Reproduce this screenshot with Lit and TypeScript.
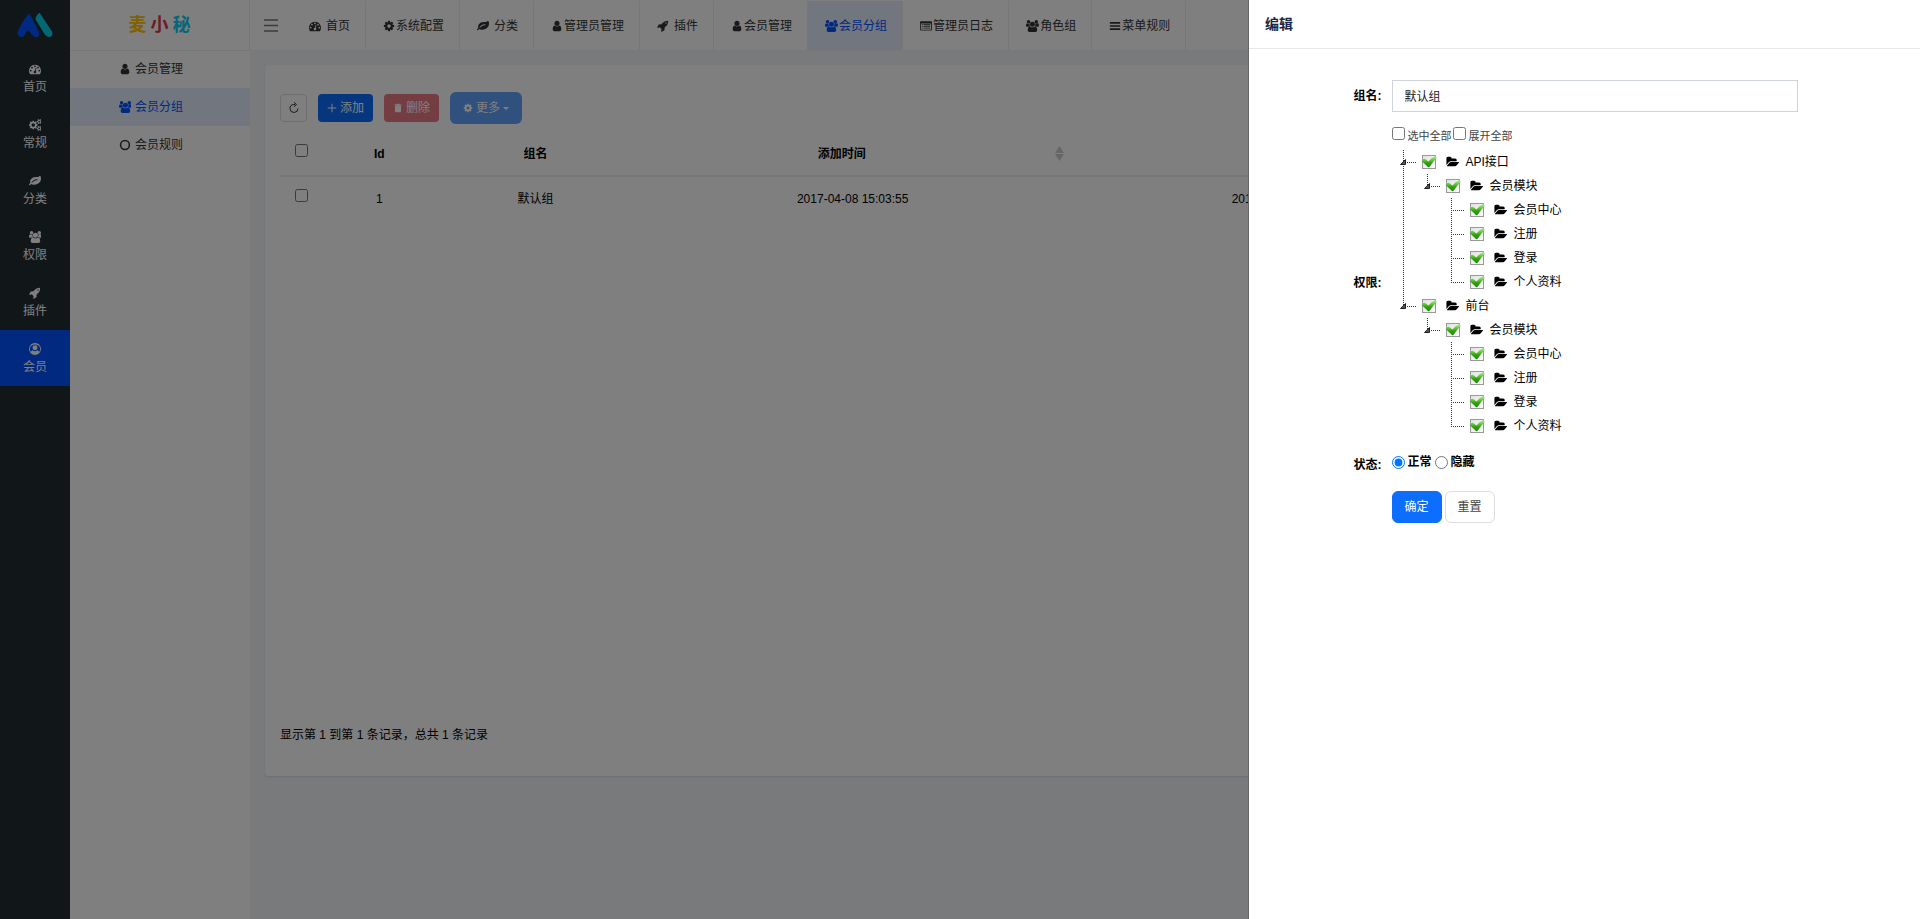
import { LitElement, html, css, svg, nothing, TemplateResult } from "lit";
import { customElement } from "lit/decorators.js";
import { classMap } from "lit/directives/class-map.js";

type Glyph = { w: number; body: TemplateResult };
const glyph = (w: number, d: string): Glyph => ({ w, body: svg`<path d=${d}></path>` as any });

const GLYPHS: Record<string, Glyph> = {
  user: glyph(1792, "M1536 1399q0 109-62.5 187t-150.5 78h-854q-88 0-150.5-78t-62.5-187q0-85 8.5-160.5t31.5-152 58.5-131 94-89 134.5-34.5q131 128 313 128t313-128q76 0 134.5 34.5t94 89 58.5 131 31.5 152 8.5 160.5zm-256-887q0 159-112.5 271.5t-271.5 112.5-271.5-112.5-112.5-271.5 112.5-271.5 271.5-112.5 271.5 112.5 112.5 271.5z"),
  cog: glyph(1792, "M1152 896q0-106-75-181t-181-75-181 75-75 181 75 181 181 75 181-75 75-181zm512-109v222q0 12-8 23t-20 13l-185 28q-19 54-39 91 35 50 107 138 10 12 10 25t-9 23q-27 37-99 108t-94 71q-12 0-26-9l-138-108q-44 23-91 38-16 136-29 186-7 28-36 28h-222q-14 0-24.5-8.5t-11.5-21.5l-28-184q-49-16-90-37l-141 107q-10 9-25 9-14 0-25-11-126-114-165-168-7-10-7-23 0-12 8-23 15-21 51-66.5t54-70.5q-27-50-41-99l-183-27q-13-2-21-12.5t-8-23.5v-222q0-12 8-23t19-13l186-28q14-46 39-92-40-57-107-138-10-12-10-24 0-10 9-23 26-36 98.5-107.5t94.5-71.5q13 0 26 10l138 107q44-23 91-38 16-136 29-186 7-28 36-28h222q14 0 24.5 8.5t11.5 21.5l28 184q49 16 90 37l142-107q9-9 24-9 13 0 25 10 129 119 165 170 7 8 7 22 0 12-8 23-15 21-51 66.5t-54 70.5q26 50 41 98l183 28q13 2 21 12.5t8 23.5z"),
  cogs: glyph(1920, "M896 896q0-106-75-181t-181-75-181 75-75 181 75 181 181 75 181-75 75-181zm768 512q0-52-38-90t-90-38-90 38-38 90q0 53 37.5 90.5t90.5 37.5 90.5-37.5 37.5-90.5zm0-1024q0-52-38-90t-90-38-90 38-38 90q0 53 37.5 90.5t90.5 37.5 90.5-37.5 37.5-90.5zm-384 421v185q0 10-7 19.5t-16 10.5l-155 24q-11 35-32 76 34 48 90 115 7 11 7 20 0 12-7 19-23 30-82.5 89.5t-78.5 59.5q-11 0-21-7l-115-90q-37 19-77 31-11 108-23 155-7 24-30 24h-186q-11 0-20-7.5t-10-17.5l-23-153q-34-10-75-31l-118 89q-7 7-20 7-11 0-21-8-144-133-144-160 0-9 7-19 10-14 41-53t47-61q-23-44-35-82l-152-24q-10-1-17-9.5t-7-19.5v-185q0-10 7-19.5t16-10.5l155-24q11-35 32-76-34-48-90-115-7-11-7-20 0-12 7-20 22-30 82-89t79-59q11 0 21 7l115 90q34-18 77-32 11-108 23-154 7-24 30-24h186q11 0 20 7.5t10 17.5l23 153q34 10 75 31l118-89q8-7 20-7 11 0 21 8 144 133 144 160 0 8-7 19-12 16-42 54t-45 60q23 48 34 82l152 23q10 2 17 10.5t7 19.5zm640 533v140q0 16-149 31-12 27-30 52 51 113 51 138 0 4-4 7-122 71-124 71-8 0-46-47t-52-68q-20 2-30 2t-30-2q-14 21-52 68t-46 47q-2 0-124-71-4-3-4-7 0-25 51-138-18-25-30-52-149-15-149-31v-140q0-16 149-31 13-29 30-52-51-113-51-138 0-4 4-7 4-2 35-20t59-34 30-16q8 0 46 46.5t52 67.5q20-2 30-2t30 2q51-71 92-112l6-2q4 0 124 70 4 3 4 7 0 25-51 138 17 23 30 52 149 15 149 31zm0-1024v140q0 16-149 31-12 27-30 52 51 113 51 138 0 4-4 7-122 71-124 71-8 0-46-47t-52-68q-20 2-30 2t-30-2q-14 21-52 68t-46 47q-2 0-124-71-4-3-4-7 0-25 51-138-18-25-30-52-149-15-149-31v-140q0-16 149-31 13-29 30-52-51-113-51-138 0-4 4-7 4-2 35-20t59-34 30-16q8 0 46 46.5t52 67.5q20-2 30-2t30 2q51-71 92-112l6-2q4 0 124 70 4 3 4 7 0 25-51 138 17 23 30 52 149 15 149 31z"),
  leaf: glyph(1792, "M1280 704q0-26-19-45t-45-19q-172 0-318 49.5t-259.5 134-235.5 219.5q-19 21-19 45 0 26 19 45t45 19q24 0 45-19 27-24 74-71t67-66q137-124 268.5-176t313.5-52q26 0 45-19t19-45zm512-198q0 95-20 193-46 224-184.5 383t-357.5 268q-214 108-438 108-148 0-286-47-15-5-88-42t-96-37q-16 0-39.5 32t-45 70-52.5 70-60 32q-43 0-63.5-17.5t-45.5-59.5q-2-4-6-11t-5.5-10-3-9.5-1.5-13.5q0-35 31-73.5t68-65.5 68-56 31-48q0-4-14-38t-16-44q-9-51-9-104 0-115 43.5-220t119-184.5 170.5-139 204-95.5q55-18 145-25.5t179.5-9 178.5-6 163.5-24 113.5-56.5l29.5-29.5 29.5-28 27-20 36.5-16 43.5-4.5q39 0 70.5 46t47.5 112 24 124 8 96z"),
  rocket: glyph(1792, "M1440 448q0-40-28-68t-68-28-68 28-28 68 28 68 68 28 68-28 28-68zm224-288q0 249-75.5 430.5t-253.5 360.5q-81 80-195 176l-20 379q-2 16-16 26l-384 224q-7 4-16 4-12 0-23-9l-64-64q-13-14-8-32l85-276-281-281-276 85q-3 1-9 1-14 0-23-9l-64-64q-17-19-5-39l224-384q10-14 26-16l379-20q96-114 176-195 188-187 358-258t431-71q14 0 24 9.5t10 22.5z"),
  dash: glyph(1792, "M384 1152q0-53-37.5-90.5t-90.5-37.5-90.5 37.5-37.5 90.5 37.5 90.5 90.5 37.5 90.5-37.5 37.5-90.5zm192-448q0-53-37.5-90.5t-90.5-37.5-90.5 37.5-37.5 90.5 37.5 90.5 90.5 37.5 90.5-37.5 37.5-90.5zm428 481l101-382q6-26-7.5-48.5t-38.5-29.5-48 6.5-30 39.5l-101 382q-60 5-107 43.5t-63 98.5q-20 77 20 146t117 89 146-20 89-117q16-60-6-117t-72-91zm660-33q0-53-37.5-90.5t-90.5-37.5-90.5 37.5-37.5 90.5 37.5 90.5 90.5 37.5 90.5-37.5 37.5-90.5zm-640-640q0-53-37.5-90.5t-90.5-37.5-90.5 37.5-37.5 90.5 37.5 90.5 90.5 37.5 90.5-37.5 37.5-90.5zm448 192q0-53-37.5-90.5t-90.5-37.5-90.5 37.5-37.5 90.5 37.5 90.5 90.5 37.5 90.5-37.5 37.5-90.5zm320 448q0 261-141 483-19 29-54 29h-1402q-35 0-54-29-141-221-141-483 0-182 71-348t191-286 286-191 348-71 348 71 286 191 191 286 71 348z"),
  users: glyph(1920, "M593 896q-162 5-265 128h-134q-82 0-138-40.5t-56-118.5q0-353 124-353 6 0 43.5 21t97.5 42.5 119 21.5q67 0 133-23-5 37-5 66 0 159 93 292zm1071 637q0 120-73 189.5t-194 69.5h-874q-121 0-194-69.5t-73-189.5q0-53 3.5-103.5t14-109 26.5-108.5 43-97.5 62-81 85.5-53.5 111.5-20q10 0 43 21.5t73 48 107 48 135 21.5 135-21.5 107-48 73-48 43-21.5q61 0 111.5 20t85.5 53.5 62 81 43 97.5 26.5 108.5 14 109 3.5 103.5zm-1024-1277q0 106-75 181t-181 75-181-75-75-181 75-181 181-75 181 75 75 181zm704 384q0 159-112.5 271.5t-271.5 112.5-271.5-112.5-112.5-271.5 112.5-271.5 271.5-112.5 271.5 112.5 112.5 271.5zm576 225q0 78-56 118.5t-138 40.5h-134q-103-123-265-128 93-133 93-292 0-29-5-66 66 23 133 23 59 0 119-21.5t97.5-42.5 43.5-21q124 0 124 353zm-128-609q0 106-75 181t-181 75-181-75-75-181 75-181 181-75 181 75 75 181z"),
  folder: glyph(1943, "M1943 952q0 31-31 66l-336 396q-43 51-120.5 86.5t-143.5 35.5h-1088q-34 0-60.5-13t-26.5-43q0-31 31-66l336-396q43-51 120.5-86.5t143.5-35.5h1088q34 0 60.5 13t26.5 43zm-343-344v160h-832q-94 0-197 47.5t-164 119.5l-337 396-5 6q0-4-.5-12.5t-.5-12.5v-960q0-92 66-158t158-66h320q92 0 158 66t66 158v32h544q92 0 158 66t66 158z"),
  bars: glyph(1792, "M128 300h1536v250h-1536zM128 770h1536v250h-1536zM128 1240h1536v250h-1536z"),
  trash: glyph(1792, "M640 128h512l64 128h320v192H256V256h320zM352 512h1088v1024q0 128-128 128H480q-128 0-128-128z"),
  plus: glyph(1792, "M812 132h168v680h680v168H980v680H812V980H132V812h680z"),
  circle: { w: 1792, body: svg`<circle cx="896" cy="896" r="660" fill="none" stroke="currentColor" stroke-width="230"></circle>` as any },
  member: { w: 1792, body: svg`<path fill-rule="evenodd" d="M896 0a896 896 0 1 1 0 1792a896 896 0 0 1 0-1792zM896 130a766 766 0 0 0-766 766q0 230 130 430q80-200 280-240q150 130 356 130t356-130q200 40 280 240q130-200 130-430A766 766 0 0 0 896 130z" transform="rotate(0)"></path><path d="M896 330a370 370 0 1 1 0 740a370 370 0 0 1 0-740z"></path><path d="M200 350Q896-260 1592 350L1450 420Q896 0 342 420z"></path>` as any },
  list: { w: 1792, body: svg`<path fill-rule="evenodd" d="M160 192h1472q160 0 160 160v1056q0 160-160 160H160Q0 1568 0 1408V352Q0 192 160 192zM128 512v896q0 32 32 32h1472q32 0 32-32V512z"></path><path d="M256 640h160v128H256zM512 640h1024v128H512zM256 896h160v128H256zM512 896h1024v128H512zM256 1152h160v128H256zM512 1152h1024v128H512z"></path>` as any },
};

const icon = (name: string, size = 12) => {
  const g = GLYPHS[name];
  return html`<svg class="icon" aria-hidden="true" height=${size} width=${(size * g.w) / 1792}
    viewBox="0 0 ${g.w} 1792" fill="currentColor">${g.body}</svg>`;
};

type Item = { icon: string; text: string; active?: boolean; spaced?: boolean };
type Node = { text: string; children?: Node[] };

const MODULES: Item[] = [
  { icon: "dash", text: "首页" },
  { icon: "cogs", text: "常规" },
  { icon: "leaf", text: "分类" },
  { icon: "users", text: "权限" },
  { icon: "rocket", text: "插件" },
  { icon: "member", text: "会员", active: true },
];

const MENU: Item[] = [
  { icon: "user", text: "会员管理" },
  { icon: "users", text: "会员分组", active: true },
  { icon: "circle", text: "会员规则" },
];

const TABS: Item[] = [
  { icon: "dash", text: "首页", spaced: true },
  { icon: "cog", text: "系统配置" },
  { icon: "leaf", text: "分类", spaced: true },
  { icon: "user", text: "管理员管理" },
  { icon: "rocket", text: "插件", spaced: true },
  { icon: "user", text: "会员管理" },
  { icon: "users", text: "会员分组", active: true },
  { icon: "list", text: "管理员日志" },
  { icon: "users", text: "角色组" },
  { icon: "bars", text: "菜单规则" },
];

const memberModule = (): Node => ({
  text: "会员模块",
  children: [{ text: "会员中心" }, { text: "注册" }, { text: "登录" }, { text: "个人资料" }],
});

const TREE: Node[] = [
  { text: "API接口", children: [memberModule()] },
  { text: "前台", children: [memberModule()] },
];

const base = css`
  * { box-sizing: border-box; }
  ul { list-style: none; margin: 0; padding: 0; }
  a { color: inherit; text-decoration: none; }
  button, input { font: inherit; }
  .icon { display: block; flex: none; }
`;

@customElement("permission-tree")
export class PermissionTree extends LitElement {
  static styles = [base, css`
    :host { display: block; line-height: 24px; color: #000; }
    .node {
      background-image: repeating-linear-gradient(to bottom, #333 0 1px, transparent 1px 2px);
      background-repeat: no-repeat;
      background-position: 11px 0;
      background-size: 1px 100%;
    }
    .node.last { background-size: 1px 12px; }
    .kids { padding-left: 24px; }
    .row {
      display: grid;
      grid-template-columns: 24px 30px 20px auto;
      justify-content: start;
      align-items: center;
      height: 24px;
      background: repeating-linear-gradient(to right, #333 0 1px, transparent 1px 2px) 11px 12px / 13px 1px no-repeat;
    }
    .arrow { width: 6px; height: 6px; margin-left: 8px; margin-bottom: 1px; display: block; }
    .tick { display: grid; width: 16px; height: 16px; margin-left: 5px; place-items: center; }
    .tick > * { grid-area: 1 / 1; }
    .box {
      appearance: none; margin: 0; width: 14px; height: 14px;
      border: 1px solid #999; background: linear-gradient(135deg, #e2e2e2, #fbfbfb);
    }
    .mark { pointer-events: none; visibility: hidden; }
    .box:checked + .mark { visibility: visible; }
  `];

  private node(n: Node, last: boolean, path: string): TemplateResult {
    const kids = n.children;
    return html`<li class=${classMap({ node: true, last })}>
      <div class="row">
        <span>${kids ? html`<svg class="arrow" viewBox="0 0 6 6"><path d="M5.5 .5V5.5H.5z" fill="#555" stroke="#222" /></svg>` : nothing}</span>
        <span class="tick">
          <input class="box" type="checkbox" id=${path} checked>
          <svg class="mark" width="16" height="16" viewBox="0 0 16 16">
            <defs><linearGradient id="shine" x1="0" y1="0" x2="0" y2="1">
              <stop offset="0" stop-color="#b4e89a"/><stop offset=".4" stop-color="#5cc235"/><stop offset=".6" stop-color="#2fa30c"/><stop offset="1" stop-color="#1f8a06"/>
            </linearGradient></defs>
            <path d="M.6 7Q2.400 4 4.600 5.200L7.400 7.400Q10.200 3.600 14 2.200Q16 2 15.600 4Q11.800 8 8.800 12.500Q7.600 13.800 6.400 12.500Q3.600 9.800 .6 7z" fill="url(#shine)"/>
          </svg>
        </span>
        ${icon("folder", 12)}
        <label for=${path}>${n.text}</label>
      </div>
      ${kids ? html`<ul class="kids">${kids.map((k, i) => this.node(k, i === kids.length - 1, `${path}-${i}`))}</ul>` : nothing}
    </li>`;
  }

  render() {
    return html`<ul>${TREE.map((n, i) => this.node(n, i === TREE.length - 1, `rule-${i}`))}</ul>`;
  }
}

@customElement("app-root")
export class AppRoot extends LitElement {
  static styles = [base, css`
    :host {
      display: block;
      font: 12px/18px "Liberation Sans", "Noto Sans CJK SC", sans-serif;
      color: #000;
    }
    .page { display: flex; min-height: 100vh; background: #f0f4f9; }

    .rail { flex: none; width: 70px; background: #222d32; color: #fff; }
    .logo { display: flex; height: 50px; align-items: center; justify-content: center; }
    .module {
      display: flex; flex-direction: column; align-items: center; justify-content: center;
      gap: 3px; height: 56px; padding-top: 2px;
    }
    .module.active { background: #0052ff; }

    .side { flex: none; width: 180px; background: #fff; }
    .brand {
      display: flex; align-items: center; justify-content: center; gap: 4px;
      height: 51px; margin: 0; border: solid #eee; border-width: 0 1px 1px 0;
      font-size: 18px; line-height: 24px; font-weight: 700;
    }
    .gold { color: #ffc107; }
    .red { color: #dc3545; }
    .cyan { color: #0dcaf0; }
    .entry {
      display: grid; grid-template-columns: 20px auto; justify-content: start; align-items: center;
      height: 38px; padding-left: 45px; color: #333;
    }
    .entry .icon { justify-self: center; }
    .entry.active { background: #e2ecff; color: #0052ff; }
    .menu { margin-top: -1px; }

    .main { flex: 1; min-width: 0; }
    .tabs { display: flex; height: 51px; background: #fff; border-bottom: 1px solid #eee; overflow: hidden; }
    .toggle {
      flex: none; display: flex; align-items: center; width: 42px; padding: 0 14px;
      border: 0; background: none;
    }
    .tab {
      flex: none; display: flex; align-items: center; margin-top: 1px; padding: 0 15px 0 16px;
      border-right: 1px solid #eee; color: #333;
    }
    .tab.active { background: #e2ecff; color: #0052ff; }
    .glyph { display: grid; place-items: center; width: 14px; height: 14px; padding-right: 1px; }
    .glyph.wide { width: 15px; }
    .tab.spaced .glyph { margin-right: 4px; }

    .card {
      margin: 14px 15px; padding: 27px 15px 32px; background: #fff; border-radius: 4px;
      box-shadow: 0 1px 2px rgba(0, 0, 0, .1);
    }
    .tools { display: flex; align-items: center; gap: 11px; }
    .tool {
      display: flex; align-items: center; justify-content: center; gap: 3px; height: 28px; padding: 0 8px;
      border: 1px solid transparent; border-radius: 4px; color: #fff;
    }
    .refresh { width: 27px; padding: 0; background: #fff; border-color: #ddd; color: #333; }
    .add { background: #0d6efd; }
    .del { background: #dc3545; opacity: .65; }
    .more { height: 32px; padding: 0 12px; border-radius: 6px; background: #0d6efd; opacity: .65; }
    .caret { border: solid transparent; border-width: 3px 3px 0; border-top-color: #fff; }

    .grid-box { min-height: 594px; margin-top: 8px; }
    .grid { width: 100%; table-layout: fixed; border-collapse: collapse; text-align: center; }
    .grid th, .grid td { padding: 0; height: 44px; vertical-align: middle; }
    .grid th { border-bottom: 2px solid #eee; font-weight: 700; }
    .grid .c-pick { width: 43px; }
    .grid .c-id { width: 7%; }
    .grid .c-name { width: 12.4%; }
    .grid .c-time { width: 27%; }
    .grid input { display: block; width: 13px; height: 13px; margin: 0 auto 6px 15px; }
    .sortable { display: flex; align-items: center; justify-content: center; padding-right: 6px; }
    .sortable span { flex: 1; padding-right: 7px; }
    .summary { margin: 0; }

    .shade { position: fixed; inset: 0; background: rgba(0, 0, 0, .5); }
    .drawer {
      position: fixed; top: 0; right: 0; bottom: 0; width: 35%; background: #fff;
      border-left: 1px solid #666; overflow: auto;
    }
    .title {
      margin: 0; padding: 15px 16px; font-size: 14px; line-height: 18px; font-weight: 700;
      color: #1b2648; border-bottom: 1px solid #e8e8e8;
    }
    .form { display: grid; gap: 15px; padding: 31px 6px 0 26px; }
    .field { display: grid; grid-template-columns: 2fr 8fr 2fr; align-items: center; }
    .name { font-weight: 700; text-align: right; }
    .value { padding: 0 10px; min-width: 0; }
    .text {
      display: block; width: 100%; height: 32px; padding: 0 12px 2px; color: #222;
      border: 1px solid #ced4da; border-radius: 0; outline: 0;
    }
    .checks { display: flex; align-items: flex-start; height: 23px; font-size: 11px; color: #444; }
    .checks input, .radios input { width: 13px; height: 13px; margin: 0; }
    .checks label { padding: 0 1px 0 3px; }
    .radios { display: flex; align-items: center; padding-bottom: 5px; font-weight: 700; }
    .radios label { padding: 0 3px; }
    .actions { display: flex; gap: 3px; grid-column: 2; }
    .btn { width: 50px; height: 32px; padding: 0; border: 1px solid #ddd; border-radius: 6px; background: #fff; color: #444; }
    .btn.primary { background: #0d6efd; border-color: #0d6efd; color: #fff; }
  `];

  private sortHead(text: string) {
    return html`<div class="sortable"><span>${text}</span>
      <svg class="icon" width="9" height="15" viewBox="0 0 9 15" fill="#ccc"><path d="M4.500 0L9 7H0zM0 8h9l-4.500 7z"/></svg></div>`;
  }

  render() {
    return html`
      <div class="page">
        <nav class="rail">
          <a class="logo" href="#" aria-label="home">
            <svg width="36" height="26" viewBox="0 0 36 26">
              <path d="M12 1.500Q13.500 3 15 6L22 20Q23.500 25.500 18.500 25Q15.500 24.500 13.500 21L12 18.500Q10 18.500 8.500 21.500Q7.500 25 4 25Q-.5 24.500 .6 20Q5 9 12 1.500z" fill="#0052ff"/>
              <path d="M22.600 .8L35 19.500Q36.600 24.500 32 25Q29.500 25.200 27.500 22L18.600 7.500Q18.500 4 22.600 .8z" fill="#09cfe4"/>
            </svg>
          </a>
          ${MODULES.map((m) => html`<a href="#" class=${classMap({ module: true, active: !!m.active })}>${icon(m.icon)}<span>${m.text}</span></a>`)}
        </nav>

        <aside class="side">
          <h1 class="brand"><span class="gold">麦</span><span class="red">小</span><span class="cyan">秘</span></h1>
          <div class="menu">
            ${MENU.map((m) => html`<a href="#" class=${classMap({ entry: true, active: !!m.active })}>${icon(m.icon)}<span>${m.text}</span></a>`)}
          </div>
        </aside>

        <main class="main">
          <nav class="tabs">
            <button class="toggle" aria-label="menu">
              <svg width="14" height="13" viewBox="0 0 14 13" stroke="#777" stroke-width="1.500"><path d="M0 1h14M0 6.500h14M0 12h14"/></svg>
            </button>
            ${TABS.map((t) => html`<a href="#" class=${classMap({ tab: true, active: !!t.active, spaced: !!t.spaced })}>
              <span class=${classMap({ glyph: true, wide: t.icon === "users" })}>${icon(t.icon)}</span><span>${t.text}</span></a>`)}
          </nav>
          <section class="card">
            <div class="tools">
              <button class="tool refresh" aria-label="refresh">
                <svg width="12" height="12" viewBox="0 0 12 12" fill="none" stroke="currentColor"><path d="M7 2.500H5.500A4 4 0 1 0 10 6.500"/><path d="M6 .3L8.500 2.500L6 4.700" /></svg>
              </button>
              <button class="tool add">${icon("plus", 10)}添加</button>
              <button class="tool del">${icon("trash", 10)}删除</button>
              <button class="tool more">${icon("cog", 10)}更多<span class="caret"></span></button>
            </div>
            <div class="grid-box">
              <table class="grid">
                <thead><tr>
                  <th class="c-pick"><input type="checkbox" aria-label="all"></th>
                  <th class="c-id">Id</th>
                  <th class="c-name">组名</th>
                  <th class="c-time">${this.sortHead("添加时间")}</th>
                  <th class="c-time">${this.sortHead("更新时间")}</th>
                  <th>操作</th>
                </tr></thead>
                <tbody><tr>
                  <td><input type="checkbox" aria-label="1"></td>
                  <td>1</td>
                  <td>默认组</td>
                  <td>2017-04-08 15:03:55</td>
                  <td>2017-04-08 15:03:55</td>
                  <td></td>
                </tr></tbody>
              </table>
            </div>
            <p class="summary">显示第 1 到第 1 条记录，总共 1 条记录</p>
          </section>
        </main>
      </div>

      <div class="shade"></div>
      <section class="drawer" role="dialog" aria-labelledby="drawer-title">
        <h2 class="title" id="drawer-title">编辑</h2>
        <form class="form">
          <div class="field">
            <label class="name" for="group">组名:</label>
            <div class="value"><input class="text" id="group" type="text" value="默认组"></div>
          </div>
          <div class="field">
            <span class="name" id="rules">权限:</span>
            <div class="value" role="group" aria-labelledby="rules">
              <div class="checks">
                <input type="checkbox" id="pick-all"><label for="pick-all">选中全部</label>
                <input type="checkbox" id="open-all"><label for="open-all">展开全部</label>
              </div>
              <permission-tree></permission-tree>
            </div>
          </div>
          <div class="field">
            <span class="name" id="state">状态:</span>
            <div class="value radios" role="radiogroup" aria-labelledby="state">
              <input type="radio" name="state" id="normal" checked><label for="normal">正常</label>
              <input type="radio" name="state" id="hidden"><label for="hidden">隐藏</label>
            </div>
          </div>
          <div class="field">
            <div class="value actions">
              <button class="btn primary" type="submit">确定</button>
              <button class="btn" type="reset">重置</button>
            </div>
          </div>
        </form>
      </section>
    `;
  }
}
